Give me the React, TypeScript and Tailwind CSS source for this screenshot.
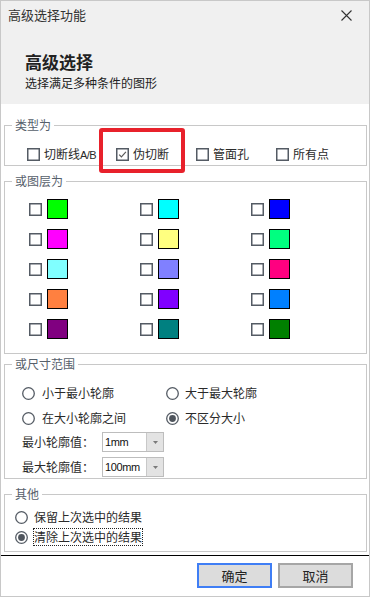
import React from "react";

const Checkbox = ({ checked = false }: { checked?: boolean }) => (
  <svg width="13" height="13" viewBox="0 0 13 13" className="shrink-0">
    <rect x="0.75" y="0.75" width="11.5" height="11.5" fill="#fff" stroke="#545b64" strokeWidth="1.5" />
    {checked && (
      <path d="M3.2 6.6 L5.4 8.8 L9.9 3.9" fill="none" stroke="#5b5b5b" strokeWidth="1.2" />
    )}
  </svg>
);

const Radio = ({ checked = false }: { checked?: boolean }) => (
  <svg width="13" height="13" viewBox="0 0 13 13" className="shrink-0">
    <circle cx="6.5" cy="6.5" r="5.8" fill="#fff" stroke="#545b64" strokeWidth="1.3" />
    {checked && <circle cx="6.5" cy="6.5" r="3.4" fill="#4f555d" />}
  </svg>
);

const Combo = ({ value }: { value: string }) => (
  <div className="w-[62px] h-[20px] border border-[#bdbdbd] bg-white flex">
    <span className="flex-1 pl-[2px] text-[11px] leading-[18px] tracking-[-0.4px] font-['Liberation_Sans',sans-serif] text-[#111]">
      {value}
    </span>
    <div className="w-[17px] h-full bg-[#e3e3e3] border-l border-[#c8c8c8] flex items-center justify-center">
      <svg width="5" height="3" viewBox="0 0 5 3">
        <path d="M0 0 L5 0 L2.5 3 Z" fill="#7a7a7a" />
      </svg>
    </div>
  </div>
);

const Legend = ({ children }: { children: React.ReactNode }) => (
  <legend className="ml-[7px] px-[3px] text-[12px] leading-[16px] text-[#56606b]">{children}</legend>
);

const colors = [
  "#00ff00", "#00ffff", "#0000ff",
  "#ff00ff", "#ffff80", "#00ff80",
  "#80ffff", "#8080ff", "#ff0080",
  "#ff8040", "#8000ff", "#0080ff",
  "#800080", "#008080", "#008000",
];

export default function App() {
  return (
    <div className="w-[370px] h-[597px] relative bg-white border border-[#c8c8c8] flex flex-col overflow-hidden text-[#2a2a2a] font-['Noto_Sans_CJK_SC',sans-serif]">
      {/* header */}
      <div className="bg-[#f0f0f0] h-[103px] flex flex-col shrink-0">
        <div className="h-[28px] flex items-center justify-between pl-[7px] pr-[17px]">
          <span className="text-[13px] leading-[16px] text-[#333]">高级选择功能</span>
          <svg width="11" height="11" viewBox="0 0 11 11">
            <path d="M0.5 0.5 L10.5 10.5 M10.5 0.5 L0.5 10.5" stroke="#333" strokeWidth="1.1" />
          </svg>
        </div>
        <div className="pl-[24px] mt-[21px] text-[17px] leading-[24px] font-bold text-[#222]">高级选择</div>
        <div className="pl-[24px] mt-[1px] text-[12px] leading-[16px] text-[#222]">选择满足多种条件的图形</div>
      </div>

      {/* group 1 */}
      <fieldset className="ml-[3px] w-[363px] mt-[13px] border border-[#c8c8c8]">
        <Legend>类型为</Legend>
        <div className="pt-[13px] pb-[3px] pl-[22px] flex text-[12px] leading-[16px]">
          <div className="w-[89px] h-[16px] flex items-center gap-[4px]">
            <Checkbox />
            <span className="whitespace-nowrap">
              切断线<span className="text-[11px] tracking-[-0.6px] font-['Liberation_Sans',sans-serif]">A/B</span>
            </span>
          </div>
          <div className="w-[80px] h-[16px] flex items-center gap-[4px]">
            <Checkbox checked />
            <span>伪切断</span>
          </div>
          <div className="w-[80px] h-[16px] flex items-center gap-[4px]">
            <Checkbox />
            <span>管面孔</span>
          </div>
          <div className="h-[16px] flex items-center gap-[4px]">
            <Checkbox />
            <span>所有点</span>
          </div>
        </div>
      </fieldset>

      {/* group 2 */}
      <fieldset className="ml-[3px] w-[363px] mt-[7px] border border-[#c8c8c8]">
        <Legend>或图层为</Legend>
        <div className="pt-[10px] pb-[14px] pl-[24px] grid grid-cols-[111px_111px_111px] gap-y-[10px]">
          {colors.map((c, i) => (
            <div key={i} className="h-[20px] flex items-center gap-[5px]">
              <Checkbox />
              <div className="w-[21px] h-[20px] border border-black" style={{ backgroundColor: c }} />
            </div>
          ))}
        </div>
      </fieldset>

      {/* group 3 */}
      <fieldset className="ml-[3px] w-[363px] mt-[2px] border border-[#c8c8c8]">
        <Legend>或尺寸范围</Legend>
        <div className="pt-[13px] pb-[1px] pl-[17px] flex flex-col text-[12px] leading-[16px]">
          <div className="flex h-[16px]">
            <div className="w-[144px] flex items-center gap-[7px]">
              <Radio />
              <span>小于最小轮廓</span>
            </div>
            <div className="flex items-center gap-[6px]">
              <Radio />
              <span>大于最大轮廓</span>
            </div>
          </div>
          <div className="flex h-[16px] mt-[9px]">
            <div className="w-[144px] flex items-center gap-[7px]">
              <Radio />
              <span>在大小轮廓之间</span>
            </div>
            <div className="flex items-center gap-[6px]">
              <Radio checked />
              <span>不区分大小</span>
            </div>
          </div>
          <div className="flex items-center h-[20px] mt-[6px]">
            <span className="w-[80px]">最小轮廓值：</span>
            <Combo value="1mm" />
          </div>
          <div className="flex items-center h-[20px] mt-[5px]">
            <span className="w-[80px]">最大轮廓值：</span>
            <Combo value="100mm" />
          </div>
        </div>
      </fieldset>

      {/* group 4 */}
      <fieldset className="ml-[3px] w-[363px] mt-[7px] border border-[#c8c8c8]">
        <Legend>其他</Legend>
        <div className="pt-[7px] pb-[6px] pl-[10px] flex flex-col gap-[4px] text-[12px] leading-[16px]">
          <div className="h-[16px] flex items-center gap-[6px]">
            <Radio />
            <span>保留上次选中的结果</span>
          </div>
          <div className="h-[16px] flex items-center gap-[5px]">
            <Radio checked />
            <span className="border border-dotted border-[#222] whitespace-nowrap">清除上次选中的结果</span>
          </div>
        </div>
      </fieldset>

      <div className="mt-[3px] h-px bg-black shrink-0" />

      <div className="flex-1 flex justify-end items-start pt-[7px] pr-[16px] gap-[6px]">
        <button className="w-[75px] h-[25px] bg-[#dcdcdc] border-2 border-[#3f7ef5] text-[13px] leading-[16px] text-[#222]">
          确定
        </button>
        <button className="w-[75px] h-[25px] bg-[#dcdcdc] border-2 border-[#a6a6a6] text-[13px] leading-[16px] text-[#222]">
          取消
        </button>
      </div>

      {/* annotation */}
      <div className="absolute left-[98px] top-[127px] w-[86px] h-[45px] border-4 border-[#e8212b] rounded-[3px] pointer-events-none" />
    </div>
  );
}
